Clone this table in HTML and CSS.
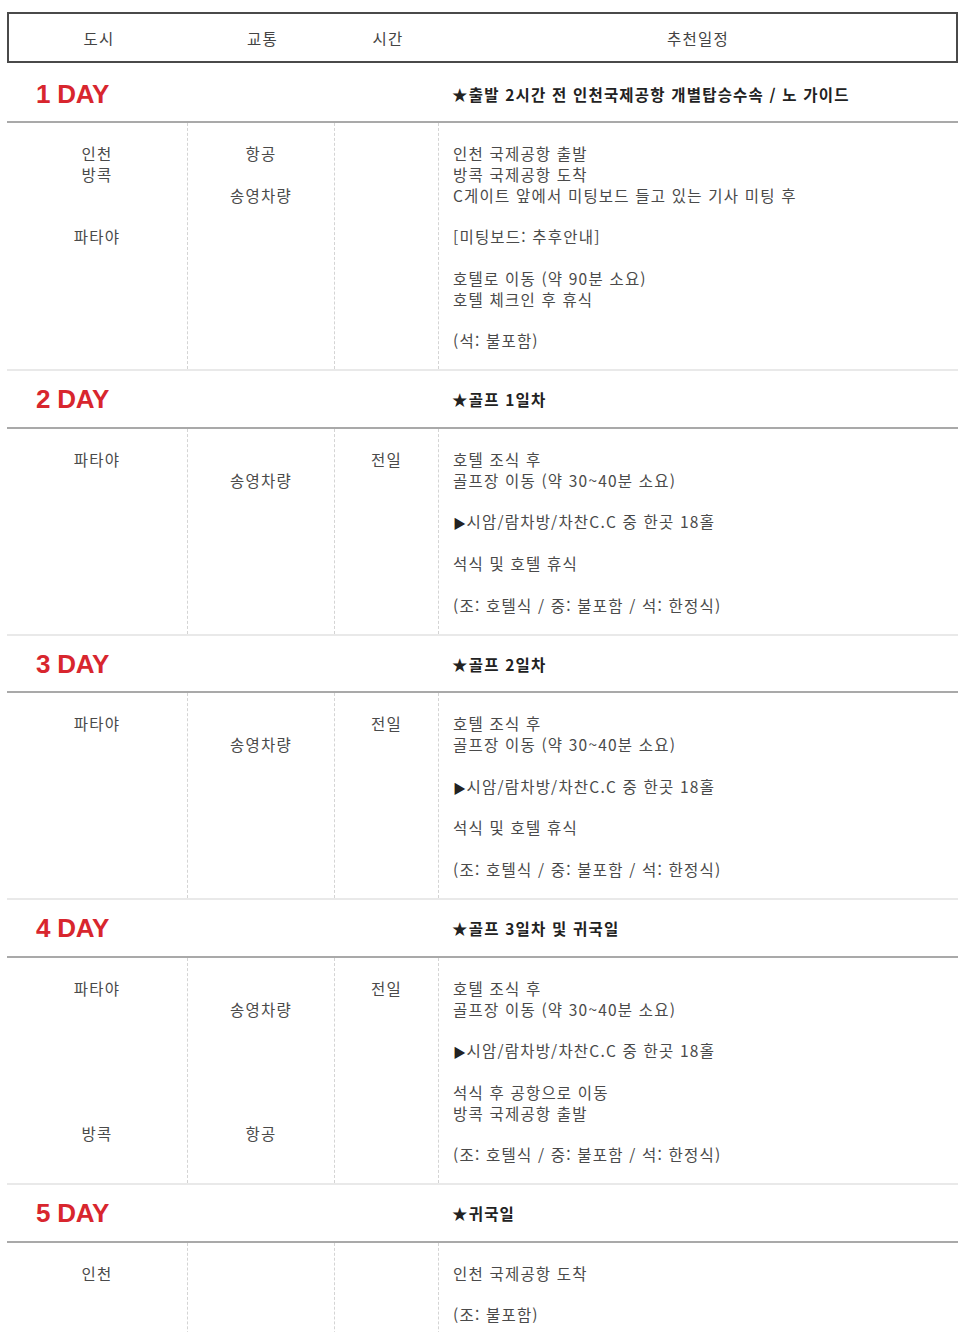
FILE: index.html
```html
<!DOCTYPE html>
<html lang="ko">
<head>
<meta charset="utf-8">
<title>추천일정</title>
<link rel="stylesheet" href="styles.css">
</head>
<body>
<div class="schedule">
  <div class="head cols">
    <div>도시</div><div>교통</div><div>시간</div><div>추천일정</div>
  </div>

  <section class="day first">
    <div class="day-head cols"><span class="day-num">1 DAY</span><span class="day-title">★출발 2시간 전 인천국제공항 개별탑승수속 / 노 가이드</span></div>
    <div class="day-body cols">
      <div class="cell c">인천<br>방콕<br><br><br>파타야</div>
      <div class="cell c">항공<br><br>송영차량</div>
      <div class="cell c"></div>
      <div class="cell plan">인천 국제공항 출발<br>방콕 국제공항 도착<br>C게이트 앞에서 미팅보드 들고 있는 기사 미팅 후<br><br>[미팅보드: 추후안내]<br><br>호텔로 이동 (약 90분 소요)<br>호텔 체크인 후 휴식<br><br>(석: 불포함)</div>
    </div>
  </section>

  <section class="day">
    <div class="day-head cols"><span class="day-num">2 DAY</span><span class="day-title">★골프 1일차</span></div>
    <div class="day-body cols">
      <div class="cell c">파타야</div>
      <div class="cell c"><br>송영차량</div>
      <div class="cell c">전일</div>
      <div class="cell plan">호텔 조식 후<br>골프장 이동 (약 30~40분 소요)<br><br><span class="tri">▶</span>시암/람차방/차찬C.C 중 한곳 18홀<br><br>석식 및 호텔 휴식<br><br>(조: 호텔식 / 중: 불포함 / 석: 한정식)</div>
    </div>
  </section>

  <section class="day">
    <div class="day-head cols"><span class="day-num">3 DAY</span><span class="day-title">★골프 2일차</span></div>
    <div class="day-body cols">
      <div class="cell c">파타야</div>
      <div class="cell c"><br>송영차량</div>
      <div class="cell c">전일</div>
      <div class="cell plan">호텔 조식 후<br>골프장 이동 (약 30~40분 소요)<br><br><span class="tri">▶</span>시암/람차방/차찬C.C 중 한곳 18홀<br><br>석식 및 호텔 휴식<br><br>(조: 호텔식 / 중: 불포함 / 석: 한정식)</div>
    </div>
  </section>

  <section class="day">
    <div class="day-head cols"><span class="day-num">4 DAY</span><span class="day-title">★골프 3일차 및 귀국일</span></div>
    <div class="day-body cols">
      <div class="cell c">파타야<br><br><br><br><br><br><br>방콕</div>
      <div class="cell c"><br>송영차량<br><br><br><br><br><br>항공</div>
      <div class="cell c">전일</div>
      <div class="cell plan">호텔 조식 후<br>골프장 이동 (약 30~40분 소요)<br><br><span class="tri">▶</span>시암/람차방/차찬C.C 중 한곳 18홀<br><br>석식 후 공항으로 이동<br>방콕 국제공항 출발<br><br>(조: 호텔식 / 중: 불포함 / 석: 한정식)</div>
    </div>
  </section>

  <section class="day">
    <div class="day-head cols"><span class="day-num">5 DAY</span><span class="day-title">★귀국일</span></div>
    <div class="day-body cols">
      <div class="cell c">인천</div>
      <div class="cell c"></div>
      <div class="cell c"></div>
      <div class="cell plan">인천 국제공항 도착<br><br>(조: 불포함)</div>
    </div>
  </section>
</div>
</body>
</html>
```

FILE: styles.css
```css
html, body {
  margin: 0;
  padding: 0;
  background: #fff;
}

body {
  padding: 12px 8px 0 7px;
  font-family: "Noto Sans CJK KR", "Noto Sans", sans-serif;
  font-size: 15.5px;
  letter-spacing: 1.2px;
  color: #4a4a4a;
}

.schedule {
  width: 951px;
}

.cols {
  display: grid;
  grid-template-columns: 180px 147px 104px 1fr;
}

.head {
  box-sizing: border-box;
  height: 51px;
  border: 2px solid #4a4a4a;
  align-items: center;
  text-align: center;
  color: #444;
  line-height: 20px;
  margin-bottom: 3px;
}

.day-head {
  box-sizing: content-box;
  height: 55.5px;
  align-items: center;
  border-bottom: 2px solid #a9a9a9;
}

.day.first .day-head {
  height: 55px;
}

.day-num {
  grid-column: 1 / 4;
  padding-left: 29px;
  font-family: "Liberation Sans", Arial, sans-serif;
  font-weight: bold;
  font-size: 26px;
  letter-spacing: -0.2px;
  color: #d8262e;
  line-height: 30px;
}

.day-title {
  grid-column: 4;
  padding-left: 14px;
  font-weight: bold;
  color: #222;
  line-height: 20px;
}

.day-body {
  border-bottom: 2px solid #e9e9e9;
  line-height: 20.8px;
}

.cell {
  padding: 20px 0 18.5px;
  min-height: 20.8px;
}

.cell + .cell {
  border-left: 1px dashed #d4d4d4;
}

.c {
  text-align: center;
}

.plan {
  padding-left: 14px;
  text-align: left;
}

.tri {
  color: #222;
  font-size: 13px;
  line-height: 0;
  letter-spacing: 0.5px;
}
```
